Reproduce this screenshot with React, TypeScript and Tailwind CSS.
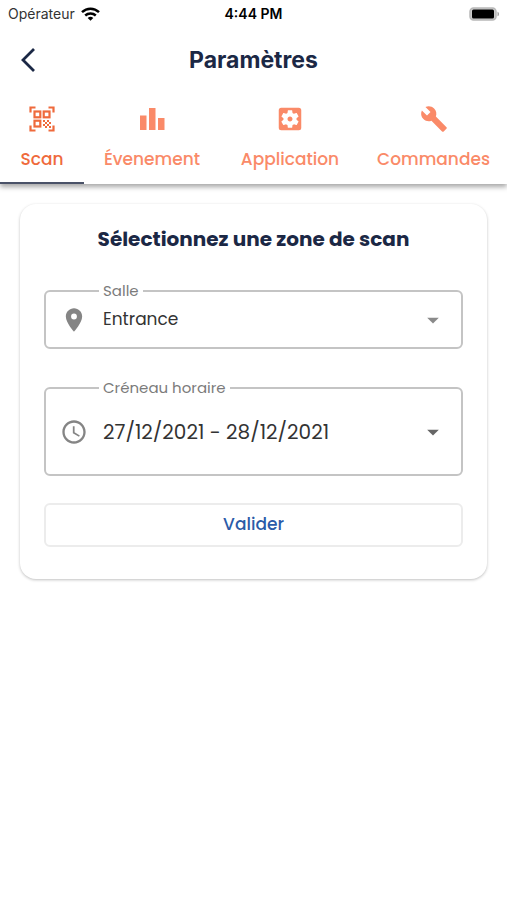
import type { ReactNode } from "react";
import {
  MdAccessTime,
  MdArrowDropDown,
  MdBuild,
  MdLocationOn,
  MdSettingsApplications,
} from "react-icons/md";

function WifiIcon() {
  return (
    <svg width="19" height="14" viewBox="0 0 19 14" fill="none" stroke="#000" strokeWidth="2.5" aria-hidden="true">
      <path d="M1 5.2C5.9.6 13.100.6 18 5.200" />
      <path d="M4.200 8.500c3-2.700 7.600-2.700 10.600 0" />
      <path d="M6.700 10.900c1.700-1.400 3.900-1.400 5.600 0L9.500 13.800z" fill="#000" stroke="none" />
    </svg>
  );
}

function BatteryIcon() {
  return (
    <svg width="30" height="15" viewBox="0 0 30 15" aria-hidden="true">
      <rect x="1" y="1" width="26" height="12" rx="3.500" fill="#ccc" stroke="#b8b8b8" strokeWidth="1.500" />
      <rect x="3" y="2.500" width="22" height="9" rx="1.500" fill="#000" />
      <path d="M28.500 4.700c2 .6 2 4 0 4.600z" fill="#a0a0a0" />
    </svg>
  );
}

function QrScanIcon() {
  return (
    <svg width="26" height="26" viewBox="0 0 26 26" fill="none" stroke="currentColor" strokeWidth="2.200" aria-hidden="true">
      <path d="M1.500 6.500v-5h5M19.500 1.500h5v5M24.500 19.500v5h-5M6.500 24.500h-5v-5" />
      <rect x="5.500" y="5.500" width="5.800" height="5.800" />
      <rect x="14.700" y="5.500" width="5.800" height="5.800" />
      <rect x="5.500" y="14.700" width="5.800" height="5.800" />
      <path
        d="M14 14h2v2h-2zM18 14h2v2h-2zM16 16h2v2h-2zM20 16h2v2h-2zM14 18h2v2h-2zM18 18h2v2h-2zM16 20h2v2h-2zM20 20h2v2h-2z"
        fill="currentColor"
        stroke="none"
      />
    </svg>
  );
}

function BarsIcon() {
  return (
    <svg width="26" height="26" viewBox="0 0 26 26" fill="currentColor" aria-hidden="true">
      <path d="M1 9.500H7.500V24H1zM10 2H16.500v22H10zM19 12H25.500v12h-6.500z" />
    </svg>
  );
}

const tabs = [
  { label: "Scan", icon: <QrScanIcon />, active: true },
  { label: "Évenement", icon: <BarsIcon />, active: false },
  { label: "Application", icon: <MdSettingsApplications size={30} />, active: false },
  { label: "Commandes", icon: <MdBuild size={28} />, active: false },
];

type SelectFieldProps = {
  id: string;
  label: string;
  value: string;
  icon: ReactNode;
  selectClass: string;
  arrowClass: string;
};

function SelectField({ id, label, value, icon, selectClass, arrowClass }: SelectFieldProps) {
  return (
    <fieldset className="min-w-0 rounded-md border-2 border-[#c4c4c4] pl-4">
      <legend className="ml-[37px] px-1 text-[15px] leading-5 text-[#7b7b7b]">
        <label htmlFor={id}>{label}</label>
      </legend>
      <div className="relative mb-2 flex items-center">
        <span className="pointer-events-none absolute -left-0.5 text-[#858585]">{icon}</span>
        <select
          id={id}
          defaultValue={value}
          className={`w-full appearance-none bg-transparent pr-12 pl-[41px] text-[#333] outline-none ${selectClass}`}
        >
          <option value={value}>{value}</option>
        </select>
        <MdArrowDropDown size={28} className={`pointer-events-none absolute right-[14px] ${arrowClass}`} />
      </div>
    </fieldset>
  );
}

export default function App() {
  return (
    <div className="min-h-screen bg-white font-[Poppins,Inter,'Noto_Sans',sans-serif]">
      <div className="grid h-7 grid-cols-[1fr_auto_1fr] items-center px-2 font-[Inter,sans-serif] text-sm text-black">
        <div className="flex items-center gap-1.5 text-[#333]">
          Opérateur
          <WifiIcon />
        </div>
        <div className="text-center font-semibold">4:44 PM</div>
        <div className="flex justify-end">
          <BatteryIcon />
        </div>
      </div>

      <header className="relative z-10 grid h-16 grid-cols-[56px_1fr_56px] items-center bg-white text-[#1b2845]">
        <button type="button" aria-label="Retour" className="flex h-full items-center pl-5">
          <svg width="16" height="24" viewBox="0 0 16 24" fill="none" stroke="currentColor" strokeWidth="2.800" aria-hidden="true">
            <path d="M14 1L3 12l11 11" />
          </svg>
        </button>
        <h1 className="text-center font-[Inter,sans-serif] text-[23px] font-bold">Paramètres</h1>
      </header>

      <nav
        role="tablist"
        className="grid grid-cols-[84fr_136fr_140fr_147fr] bg-white shadow-[0_3px_5px_rgba(0,0,0,0.35)]"
      >
        {tabs.map((tab) => (
          <button
            key={tab.label}
            type="button"
            role="tab"
            aria-selected={tab.active}
            className={`flex h-[92px] flex-col items-center border-b-2 pt-3 text-[17px] font-medium ${
              tab.active ? "border-[#4a5268] text-[#ef6a3c]" : "border-transparent text-[#fa8a68]"
            }`}
          >
            <span className="flex h-[30px] items-center">{tab.icon}</span>
            <span className="mt-[11px] leading-7">{tab.label}</span>
          </button>
        ))}
      </nav>

      <main className="px-5 pt-5">
        <form
          className="rounded-2xl bg-white px-6 pt-5 pb-8 shadow-[0_1px_3px_rgba(0,0,0,0.25)]"
          onSubmit={(event) => event.preventDefault()}
        >
          <h2 className="text-center text-xl leading-[30px] font-bold text-[#1b2845]">Sélectionnez une zone de scan</h2>
          <div className="mt-[27px]">
            <SelectField
              id="salle"
              label="Salle"
              value="Entrance"
              icon={<MdLocationOn size={28} />}
              selectClass="h-[38px] text-[17px]"
              arrowClass="text-[#8a8a8a]"
            />
          </div>
          <div className="mt-[29px]">
            <SelectField
              id="creneau"
              label="Créneau horaire"
              value="27/12/2021 - 28/12/2021"
              icon={<MdAccessTime size={28} />}
              selectClass="h-[68px] text-xl"
              arrowClass="text-[#666]"
            />
          </div>
          <button
            type="submit"
            className="mt-[27px] h-11 w-full rounded-md border-2 border-[#ececec] text-[17px] font-medium text-[#2b5ba8]"
          >
            Valider
          </button>
        </form>
      </main>
    </div>
  );
}
